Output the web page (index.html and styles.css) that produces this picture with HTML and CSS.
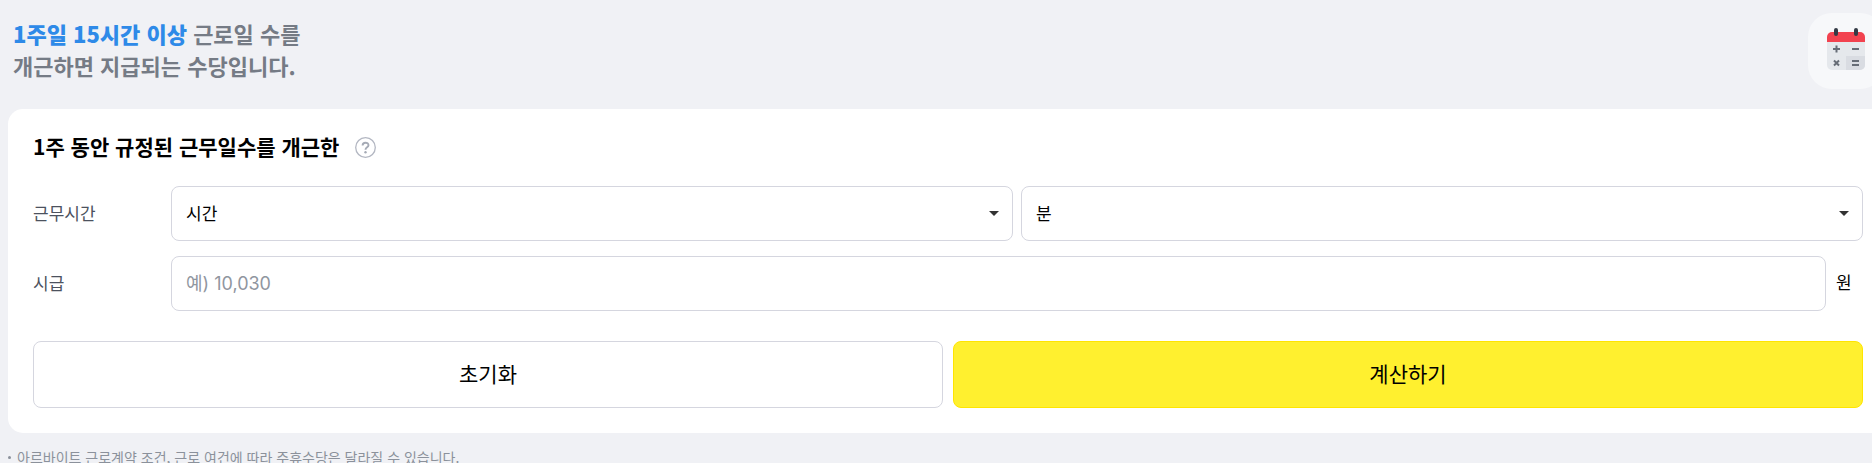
FILE: index.html
```html
<!DOCTYPE html>
<html lang="ko">
<head>
    <meta charset="UTF-8">
    <meta name="viewport" content="width=device-width, initial-scale=1.0">
    <title>주휴수당 계산기</title>
    <link rel="stylesheet" href="styles.css">
</head>
<body>
    <main class="container">
        <header class="intro">
            <p class="intro-text"><strong>1주일 15시간 이상</strong> 근로일 수를<br>개근하면 지급되는 수당입니다.</p>
            <div class="intro-icon">
                <svg width="38" height="42" viewBox="0 0 38 42" aria-hidden="true">
                    <path fill="#e5e8ec" d="M0 13h38v24a5 5 0 0 1-5 5H5a5 5 0 0 1-5-5z"/>
                    <path fill="#d9dce2" d="M19 28h19v9a5 5 0 0 1-5 5H19z"/>
                    <path fill="#f2424f" d="M5 4h28a5 5 0 0 1 5 5v5H0V9a5 5 0 0 1 5-5z"/>
                    <path fill="none" stroke="#333a45" stroke-width="4" stroke-linecap="round" d="M9 2v4M29 2v4"/>
                    <path fill="none" stroke="#666c76" stroke-width="2" d="M6 21h7M9.500 17.500v7M25 21h7M7 32.500l5 5M12 32.500l-5 5M25 33h7M25 37h7"/>
                </svg>
            </div>
        </header>

        <form class="card" id="calculator">
            <div class="card-title">
                <h1>1주 동안 규정된 근무일수를 개근한</h1>
                <button type="button" class="help" aria-label="도움말">
                    <svg width="21" height="21" viewBox="0 0 21 21" aria-hidden="true">
                        <circle cx="10.500" cy="10.500" r="9.800" fill="none" stroke="#b3b7c2" stroke-width="1.300"/>
                        <path fill="none" stroke="#a5aab5" stroke-width="1.900" d="M7.600 8.400C7.600 4.900 13.500 4.900 13.500 8.200C13.500 10.300 10.500 10.200 10.500 12.700"/>
                        <circle cx="10.500" cy="15.200" r="1.200" fill="#a5aab5"/>
                    </svg>
                </button>
            </div>

            <div class="row">
                <label for="hours">근무시간</label>
                <div class="fields">
                    <div class="select-box">
                        <select id="hours">
                            <option value="">시간</option>
                        </select>
                    </div>
                    <div class="select-box">
                        <select id="minutes" aria-label="분">
                            <option value="">분</option>
                        </select>
                    </div>
                </div>
            </div>
            <div class="row">
                <label for="wage">시급</label>
                <div class="fields">
                    <input type="text" id="wage" inputmode="numeric" placeholder="예) 10,030">
                    <span class="unit">원</span>
                </div>
            </div>

            <div class="buttons">
                <button type="reset" class="btn">초기화</button>
                <button type="button" class="btn btn-primary">계산하기</button>
            </div>
        </form>

        <ul class="notes">
            <li>아르바이트 근로계약 조건, 근로 여건에 따라 주휴수당은 달라질 수 있습니다.</li>
        </ul>
    </main>
</body>
</html>
```
FILE: styles.css
```css
* {
    box-sizing: border-box;
}
html {
    overflow: hidden;
    background-color: #f0f1f5;
}
body {
    margin: 0;
    font-family: "Noto Sans CJK KR", sans-serif;
    font-size: 17px;
    color: #000;
}
h1, p, ul {
    margin: 0;
    padding: 0;
}
.container {
    margin: 0 -16px 0 8px;
}
.intro {
    display: flex;
    justify-content: space-between;
    align-items: flex-start;
    padding: 13px 4px 20px;
}
.intro-text {
    padding: 4px 0 4px 1px;
    font-size: 22px;
    font-weight: 700;
    line-height: 32px;
    color: #757b85;
}
.intro-text strong {
    color: #2e8ae8;
}
.intro-icon {
    display: flex;
    align-items: center;
    justify-content: center;
    width: 76px;
    height: 76px;
    padding-bottom: 4px;
    border-radius: 24px;
    background-color: #f7f8fa;
}
.card {
    padding: 25px;
    border-radius: 15px;
    background-color: #fff;
}
.card-title {
    display: flex;
    align-items: center;
    gap: 16px;
    margin-bottom: 26px;
}
.card-title h1 {
    padding-bottom: 2px;
    font-size: 21px;
    font-weight: 700;
    line-height: 24px;
}
.help {
    display: flex;
    padding: 0;
    border: none;
    background: none;
    cursor: pointer;
}
.row {
    display: flex;
    align-items: center;
    margin-bottom: 15px;
}
.row label {
    flex: 0 0 138px;
    padding-bottom: 2px;
    color: #4c525e;
}
.fields {
    display: flex;
    flex: 1;
    align-items: center;
    gap: 8px;
}
.select-box {
    position: relative;
    flex: 1;
}
.select-box::after {
    content: "";
    position: absolute;
    top: 25px;
    right: 14px;
    border: 5px solid transparent;
    border-top: 5px solid #333;
    border-bottom: none;
    pointer-events: none;
}
select, input {
    width: 100%;
    height: 55px;
    padding: 0 14px 2px;
    border: 1px solid #d5d6df;
    border-radius: 8px;
    background-color: #fff;
    font-family: inherit;
    font-size: 17px;
    color: #000;
}
select {
    display: block;
    appearance: none;
}
input {
    flex: 1;
    padding-bottom: 0;
    font-family: Inter, "Noto Sans CJK KR", sans-serif;
    font-size: 18px;
}
input::placeholder {
    color: #90969f;
}
.unit {
    width: 29px;
    padding: 0 0 4px 2px;
}
.buttons {
    display: flex;
    gap: 10px;
    margin-top: 30px;
}
.btn {
    flex: 1;
    height: 67px;
    padding: 0 0 4px;
    border: 1px solid #d5d6df;
    border-radius: 8px;
    background-color: #fff;
    font-family: inherit;
    font-size: 21px;
    font-weight: 400;
    color: #000;
    cursor: pointer;
}
.btn-primary {
    border-color: #ffe500;
    background-color: #fff02f;
}
.notes {
    padding-top: 13px;
    list-style: none;
    font-size: 14px;
    line-height: 22px;
    color: #8b919b;
}
.notes li {
    display: flex;
    align-items: center;
    gap: 6px;
}
.notes li::before {
    content: "";
    width: 3px;
    height: 3px;
    border-radius: 50%;
    background-color: #8b919b;
}
```
